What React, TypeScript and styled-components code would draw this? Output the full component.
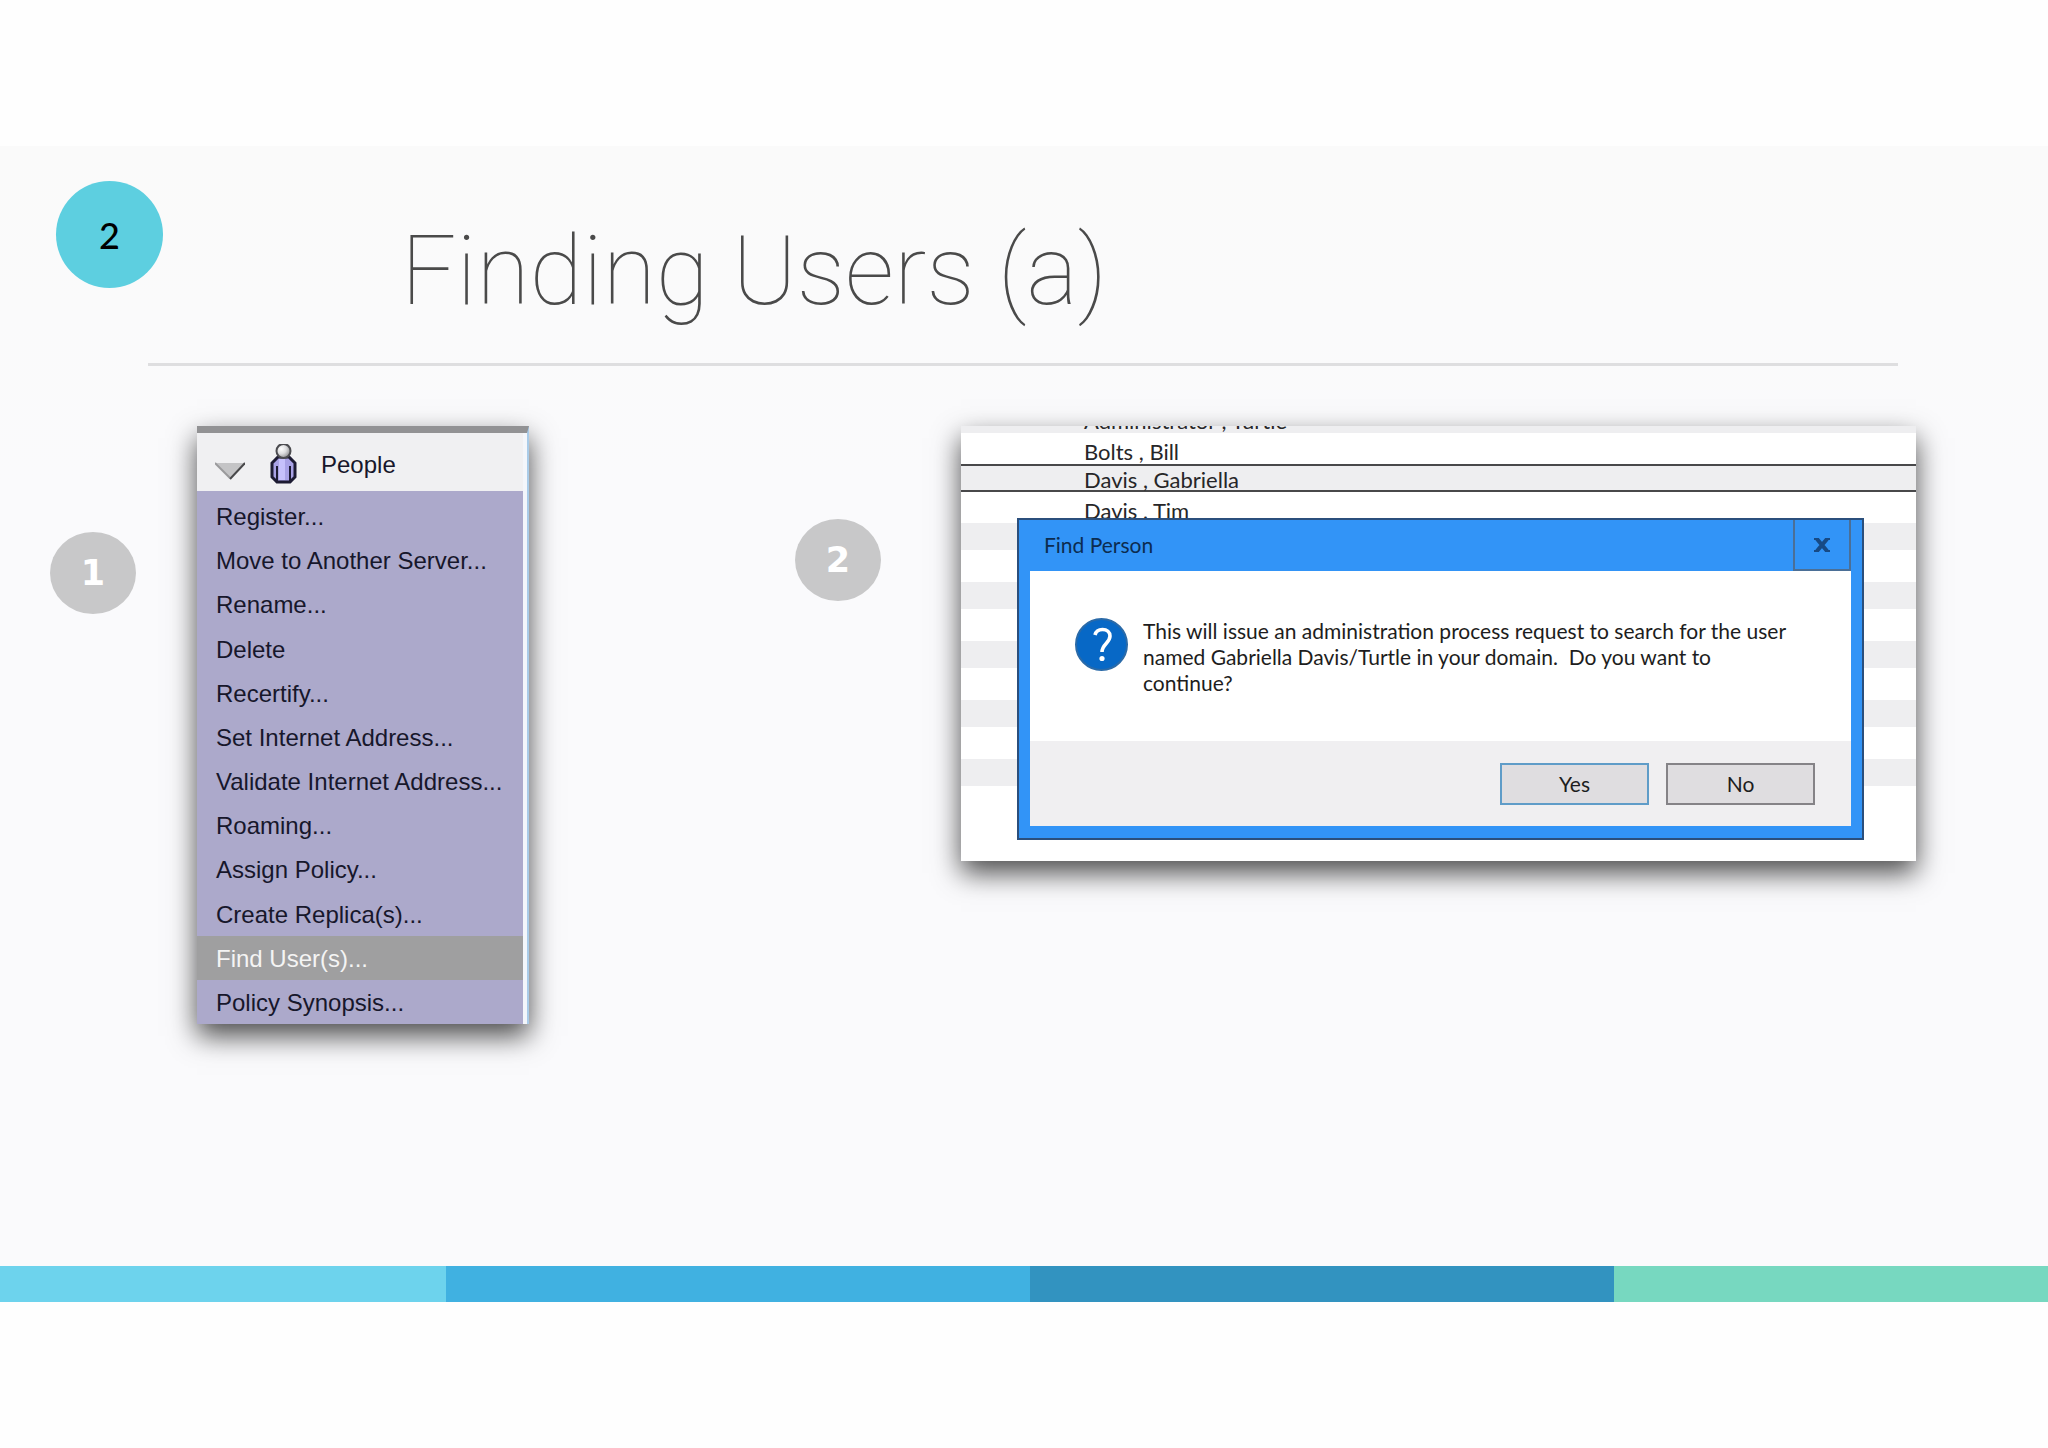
import React from "react";
import styled, { createGlobalStyle } from "styled-components";

const GlobalStyle = createGlobalStyle`
  *, *::before, *::after { box-sizing: border-box; }
  body { margin: 0; background: #fefefe; font-family: Lato, "Noto Sans", sans-serif; }
  button { font: inherit; color: inherit; cursor: pointer; }
`;

const Page = styled.div`
  min-height: 100vh;
  padding: 146px 0;
  display: grid;
  grid-template-rows: 1fr 36px;
`;

const Slide = styled.main`
  background: linear-gradient(#fafafa, #fafafc 30%);
`;

const Header = styled.header`
  display: flex;
  align-items: flex-start;
  gap: 238px;
  height: 217px;
  padding: 35px 56px 0;
`;

const SectionBadge = styled.span`
  display: grid;
  place-items: center;
  flex: none;
  width: 107px;
  height: 107px;
  border-radius: 50%;
  background: #5dcfe0;
  color: #000;
  font: 500 36px/40px Lato, sans-serif;
`;

const Title = styled.h1`
  margin: 28px 0 0;
  font: 100 97px/124px Roboto, "Liberation Sans", sans-serif;
  color: #4a4a4a;
  white-space: nowrap;
`;

const Rule = styled.hr`
  margin: 0 150px 0 148px;
  border: 0;
  height: 3px;
  background: #dedee0;
`;

const Steps = styled.div`
  display: flex;
  align-items: flex-start;
  justify-content: space-between;
  gap: 266px;
  padding: 60px 132px 60px 50px;
`;

const Step = styled.section<{ $gap: number; $grow?: boolean }>`
  display: flex;
  align-items: flex-start;
  gap: ${(p) => p.$gap}px;
  flex: ${(p) => (p.$grow ? "1 1 0" : "none")};
`;

const StepBadge = styled.span<{ $drop: number }>`
  display: grid;
  place-items: center;
  flex: none;
  width: 86px;
  height: 82px;
  margin-top: ${(p) => p.$drop}px;
  border-radius: 50%;
  background: #c8c8c9;
  color: #fff;
  font: 700 35px/40px "DejaVu Sans", sans-serif;
`;

const shadow = "0 12px 26px rgba(0, 0, 0, 0.7)";

const Menu = styled.nav`
  width: 332px;
  border-top: 7px solid #929294;
  border-right: 2px solid #a9cbe8;
  background: #f3f6fb;
  box-shadow: ${shadow};
  padding-right: 4px;
  font: 24px/42px "Liberation Sans", Arial, sans-serif;
  color: #17172b;
`;

const MenuHeader = styled.div`
  display: flex;
  align-items: center;
  height: 58px;
  padding: 5px 0 0 18px;
  background: #f0f0f2;
`;

const MenuTitle = styled.h2`
  margin: 0;
  font: inherit;
`;

const MenuIcon = styled.svg`
  flex: none;
  display: block;
`;

const MenuList = styled.ul`
  display: grid;
  grid-auto-rows: 1fr;
  height: 533px;
  margin: 0;
  padding: 3px 0 0;
  list-style: none;
  background: #aca9cb;
`;

const MenuItem = styled.button<{ $active?: boolean }>`
  display: block;
  width: 100%;
  height: 100%;
  padding: 2px 0 0 19px;
  border: 0;
  text-align: left;
  white-space: nowrap;
  background: ${(p) => (p.$active ? "#9f9fa0" : "transparent")};
  color: ${(p) => (p.$active ? "#f4f4f4" : "inherit")};
`;

const Directory = styled.div`
  position: relative;
  flex: 1;
  min-width: 0;
  height: 435px;
  background: #fff;
  box-shadow: ${shadow};
`;

const People = styled.ul`
  margin: 0;
  padding: 0;
  list-style: none;
`;

const Person = styled.li<{ $height: number; $tint?: boolean; $selected?: boolean }>`
  display: flex;
  align-items: flex-end;
  height: ${(p) => p.$height}px;
  padding-left: 123px;
  overflow: hidden;
  font-size: 22px;
  line-height: 25px;
  white-space: pre;
  color: #262628;
  background: ${(p) => (p.$tint ? "#eeeef0" : "#fff")};
  box-shadow: ${(p) => (p.$selected ? "inset 0 2px #48484a, inset 0 -2px #48484a" : "none")};
`;

const Dialog = styled.div`
  position: absolute;
  top: 92px;
  left: 56px;
  right: 52px;
  display: flex;
  flex-direction: column;
  border: 2px solid #2b4f7c;
  background: #3294f7;
  padding: 0 11px 12px;
  font-size: 21px;
  line-height: 26px;
  color: #1d1d20;
`;

const TitleBar = styled.div`
  display: flex;
  justify-content: space-between;
  align-items: stretch;
  height: 51px;
  padding-left: 14px;
`;

const DialogTitle = styled.h2`
  margin: 0;
  padding-top: 12px;
  font: inherit;
  color: #0c2c50;
`;

const CloseButton = styled.button`
  display: grid;
  place-items: center;
  width: 58px;
  padding: 0;
  border: solid #4b6f96;
  border-width: 0 2px 2px;
  background: transparent;
`;

const DialogBody = styled.div`
  display: flex;
  align-items: flex-start;
  gap: 15px;
  height: 170px;
  padding: 47px 20px 0 45px;
  background: #fff;
`;

const Message = styled.p`
  margin: 0;
  white-space: pre-line;
`;

const DialogFooter = styled.div`
  display: flex;
  justify-content: flex-end;
  gap: 17px;
  padding: 22px 36px 21px;
  background: #f0eff1;
`;

const DialogButton = styled.button<{ $primary?: boolean }>`
  width: 149px;
  height: 42px;
  padding: 0;
  border: 2px solid ${(p) => (p.$primary ? "#5f9cc8" : "#858387")};
  background: #dfdde0;
`;

const Ribbon = styled.footer`
  display: grid;
  grid-template-columns: 446fr 584fr 584fr 434fr;
`;

const Swatch = styled.span<{ $color: string }>`
  background: ${(p) => p.$color};
`;

const actions = [
  "Register...",
  "Move to Another Server...",
  "Rename...",
  "Delete",
  "Recertify...",
  "Set Internet Address...",
  "Validate Internet Address...",
  "Roaming...",
  "Assign Policy...",
  "Create Replica(s)...",
  "Find User(s)...",
  "Policy Synopsis...",
];

const people = [
  { name: "Administrator , Turtle", height: 7, tint: true },
  { name: "Bolts , Bill", height: 31 },
  { name: "Davis , Gabriella", height: 28, tint: true, selected: true },
  { name: "Davis , Tim", height: 31 },
];

const stripes = Array.from({ length: 9 }, (_, i) => i % 2 === 0);

export default function App() {
  return (
    <>
      <GlobalStyle />
      <Page>
        <Slide>
          <Header>
            <SectionBadge>2</SectionBadge>
            <Title>Finding Users (a)</Title>
          </Header>
          <Rule />
          <Steps>
            <Step $gap={61}>
              <StepBadge $drop={106}>1</StepBadge>
              <Menu aria-label="People">
                <MenuHeader>
                  <MenuIcon width="30" height="30" viewBox="0 -12 30 30" aria-hidden="true">
                    <path d="M1 1H29L15 16Z" fill="#c4c4c6" />
                    <path d="M0 1L15 16" stroke="#9a9a9c" strokeWidth="2" />
                    <path d="M15 17L30 1" stroke="#48484a" strokeWidth="2" />
                  </MenuIcon>
                  <MenuIcon width="76" height="42" viewBox="-25 1 76 42" aria-hidden="true">
                    <defs>
                      <radialGradient id="head" cx="0.35" cy="0.35" r="0.7">
                        <stop offset="0" stopColor="#fff" />
                        <stop offset="0.5" stopColor="#dcdcde" />
                        <stop offset="1" stopColor="#8d8d90" />
                      </radialGradient>
                    </defs>
                    <path d="M8 14H19L25 20V34L20 39H7L2 34V20Z" fill="#a9a2e6" stroke="#1d1b33" strokeWidth="3" />
                    <path d="M9 16H15V37H9Z" fill="#c6c1fb" />
                    <path d="M7 23V38M20 23V38" stroke="#1d1b33" strokeWidth="2" />
                    <circle cx="13.500" cy="8" r="7" fill="url(#head)" stroke="#4c4c50" strokeWidth="2" />
                  </MenuIcon>
                  <MenuTitle>People</MenuTitle>
                </MenuHeader>
                <MenuList>
                  {actions.map((label) => (
                    <li key={label}>
                      <MenuItem type="button" $active={label.startsWith("Find")}>
                        {label}
                      </MenuItem>
                    </li>
                  ))}
                </MenuList>
              </Menu>
            </Step>
            <Step $gap={80} $grow>
              <StepBadge $drop={93}>2</StepBadge>
              <Directory>
                <People>
                  {people.map((p) => (
                    <Person key={p.name} $height={p.height} $tint={p.tint} $selected={p.selected}>
                      {p.name}
                    </Person>
                  ))}
                  {stripes.map((tint, i) => (
                    <Person key={i} $height={tint ? 27 : 32} $tint={tint} aria-hidden="true" />
                  ))}
                </People>
                <Dialog role="dialog" aria-labelledby="find-person">
                  <TitleBar>
                    <DialogTitle id="find-person">Find Person</DialogTitle>
                    <CloseButton type="button" aria-label="Close">
                      <svg width="16" height="14" viewBox="0 0 16 14" aria-hidden="true">
                        <path d="M3 1L13 13M13 1L3 13" stroke="#174a85" strokeWidth="4" />
                        <path d="M0 1H5M11 1H16M0 13H5M11 13H16" stroke="#174a85" strokeWidth="2" />
                      </svg>
                    </CloseButton>
                  </TitleBar>
                  <DialogBody>
                    <svg width="53" height="53" viewBox="0 0 53 53" aria-hidden="true">
                      <circle cx="26.500" cy="26.500" r="25.500" fill="#0768c6" stroke="#2a6aa8" strokeWidth="2" />
                      <path
                        d="M20 17C21 13 24 11.500 27.500 11.500C32 11.500 35 14 35 18C35 25 27 26 27 34"
                        fill="none"
                        stroke="#fff"
                        strokeWidth="3.600"
                      />
                      <circle cx="27" cy="40.500" r="2.600" fill="#fff" />
                    </svg>
                    <Message>
                      {
                        "This will issue an administration process request to search for the user\nnamed Gabriella Davis/Turtle in your domain.\u00a0 Do you want to\ncontinue?"
                      }
                    </Message>
                  </DialogBody>
                  <DialogFooter>
                    <DialogButton type="button" $primary>
                      Yes
                    </DialogButton>
                    <DialogButton type="button">No</DialogButton>
                  </DialogFooter>
                </Dialog>
              </Directory>
            </Step>
          </Steps>
        </Slide>
        <Ribbon aria-hidden="true">
          <Swatch $color="#6dd3ed" />
          <Swatch $color="#40b1e1" />
          <Swatch $color="#3293c0" />
          <Swatch $color="#77d8c0" />
        </Ribbon>
      </Page>
    </>
  );
}
